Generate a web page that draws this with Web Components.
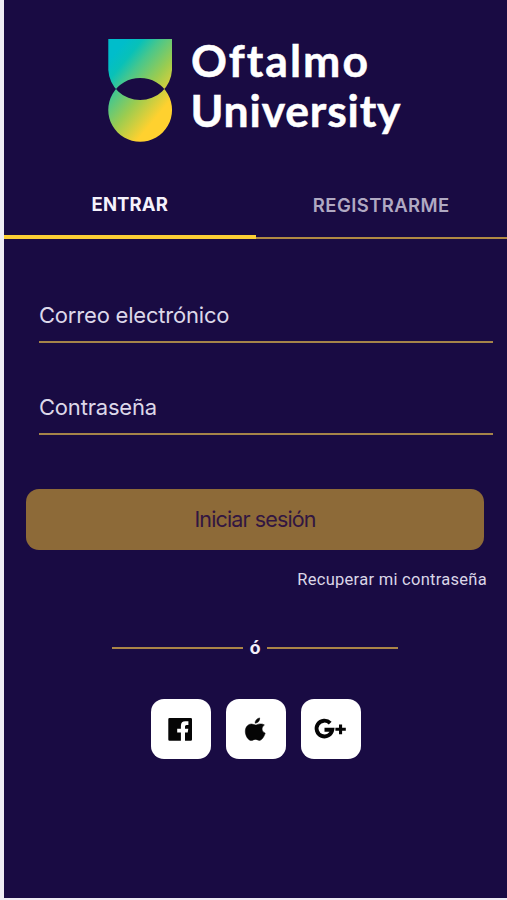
<!DOCTYPE html>
<html lang="es">
<head>
<meta charset="utf-8">
<title>Oftalmo University</title>
<style>
body {
  margin: 0;
  background: #efedf4;
}
</style>
</head>
<body>
<login-page></login-page>

<script>
function define(name, html, setup) {
  customElements.define(name, class extends HTMLElement {
    constructor() {
      super();
      this.attachShadow({ mode: 'open' });
      this.shadowRoot.innerHTML = html;
    }
    connectedCallback() {
      if (setup) setup(this, this.shadowRoot);
    }
  });
}

define('brand-logo', `
<style>
:host {
  display: flex;
  justify-content: center;
  height: 180px;
}
svg { display: block; width: 503px; height: 180px; }
text {
  font: 700 44.500px Lato, sans-serif;
  font-variant-ligatures: none;
  fill: #fff;
  stroke: #fff;
  stroke-width: .5px;
}
</style>
<svg viewBox="4 0 503 180">
  <defs>
    <linearGradient id="g" gradientUnits="userSpaceOnUse" x1="108" y1="61" x2="169" y2="112">
      <stop offset="0" stop-color="#00bdcb"/>
      <stop offset=".16" stop-color="#08c1b8"/>
      <stop offset=".33" stop-color="#48c78c"/>
      <stop offset=".6" stop-color="#9bcc50"/>
      <stop offset=".92" stop-color="#ffd12f"/>
    </linearGradient>
  </defs>
  <path fill="url(#g)" fill-rule="evenodd" d="M108.3 39H172V70A31.9 31.9 0 0 1 108.3 70ZM140.2 78A31.9 31.9 0 1 1 140.1 78Z"/>
  <text x="191" y="76.500" textLength="177">Oftalmo</text>
  <text x="190.500" y="127" textLength="210">University</text>
</svg>`);

define('tab-item', `
<style>
:host {
  display: flex;
  justify-content: center;
  flex: 1;
  box-sizing: border-box;
  height: 59px;
  padding-top: 15px;
  font: 600 18.500px/20px Inter, sans-serif;
  letter-spacing: .4px;
  color: #b0a9c2;
  border-bottom: 0 solid #fccf35;
}
:host([active]) {
  color: #f5f2fc;
  padding-top: 14px;
  font-weight: 700;
  letter-spacing: .1px;
  border-bottom-width: 4px;
}
</style>
<slot></slot>`);

define('tab-bar', `
<style>
:host {
  display: flex;
  height: 59px;
  background: linear-gradient(#b18a43, #b18a43) 0 100% / 100% 2px no-repeat;
}
</style>
<slot></slot>`);

define('text-field', `
<style>
:host {
  display: block;
  box-sizing: border-box;
  height: 43px;
  border-bottom: 2px solid #a58449;
  font: 400 22px/30px Inter, sans-serif;
  letter-spacing: -.2px;
  color: #ddd8e9;
}
span { display: inline-block; white-space: nowrap; }
</style>
<span><slot></slot></span>`);

define('submit-button', `
<style>
:host { display: block; }
button {
  display: block;
  width: 100%;
  height: 61px;
  padding: 0;
  border: 0;
  border-radius: 13px;
  background: #8d6a38;
  color: #321641;
  font: 400 21.500px/61px Inter, sans-serif;
  letter-spacing: -.88px;
}
</style>
<button><slot></slot></button>`);

define('line-divider', `
<style>
:host {
  display: flex;
  align-items: center;
  gap: 7px;
  font: 700 19px/24px Roboto, sans-serif;
  color: #f4f0fb;
}
:host::before, :host::after {
  content: "";
  flex: 1;
  height: 2px;
  background: #ab8547;
}
</style>
<slot></slot>`);

const icons = {
  facebook: '<path fill-rule="evenodd" d="M18.500 18H39.800Q41 18 41 19.200V39.600Q41 40.800 39.800 40.800H34V32.400H36.700L37.300 28.700H34V26.600Q34 25.100 35.500 25.100H37.400V21.300H34.400Q29.900 21.300 29.900 25.700V28.700H26.200V32.400H29.900V40.800H18.500Q17.300 40.800 17.300 39.600V19.200Q17.300 18 18.500 18Z"/>',
  apple: '<path stroke="#050505" stroke-width=".5" d="M33.700 17.900C33.900 20.800 31.900 23.200 29.100 23.200C28.900 20.600 31.100 18.300 33.700 17.900ZM38.400 25C35 27.200 35.400 31.600 39.200 33.100C38.300 36.300 36 40.200 33.700 40.400C32 40.500 31.500 39.400 29.500 39.400C27.500 39.400 26.900 40.400 25.400 40.500C22.300 40.600 19.300 35.700 19.300 31.400C19.300 26.900 22.200 24 25.500 24C27.300 24 28.600 25 29.600 25C30.600 25 32.300 23.800 34.500 23.900C36 23.900 37.400 24.200 38.400 25Z"/>',
  google: '<path fill="none" stroke="#050505" stroke-width="3.900" d="M29.200 23.100A7.900 7.900 0 1 0 31.300 29.800H23.500"/><path d="M38 24.400h3.100v3.400h3.700v3h-3.700v3.500H38v-3.500h-3.600v-3H38Z"/>'
};

define('social-button', `
<style>
:host { display: block; }
button {
  display: block;
  width: 60px;
  height: 60px;
  padding: 0;
  border: 0;
  border-radius: 13px;
  background: #fff;
}
svg { display: block; width: 60px; height: 60px; padding-top: 1px; box-sizing: border-box; fill: #050505; }
</style>
<button><svg viewBox="0 0 60 59"></svg></button>`, (host, root) => {
  const icon = host.getAttribute('icon');
  root.querySelector('svg').innerHTML = icons[icon];
  root.querySelector('button').setAttribute('aria-label', icon);
});

define('login-page', `
<style>
:host {
  display: flex;
  flex-direction: column;
  box-sizing: border-box;
  height: 898px;
  margin-left: 4px;
  background: #190b43;
}
.form {
  display: flex;
  flex-direction: column;
  gap: 48.500px;
  padding: 61px 14px 0 35px;
}
submit-button { margin: 54px 23px 0 22px; }
.recover {
  align-self: flex-end;
  margin: 20px 20px 0 0;
  font: 400 16.500px/20px Roboto, sans-serif;
  letter-spacing: .28px;
  color: #dbd6e8;
}
line-divider { margin: 46px 109px 0 108px; }
.social {
  display: flex;
  gap: 15px;
  margin: 39px 0 0 147px;
}
</style>
<brand-logo></brand-logo>
<tab-bar>
  <tab-item active>ENTRAR</tab-item>
  <tab-item>REGISTRARME</tab-item>
</tab-bar>
<div class="form">
  <text-field>Correo electrónico</text-field>
  <text-field>Contraseña</text-field>
</div>
<submit-button>Iniciar sesión</submit-button>
<div class="recover">Recuperar mi contraseña</div>
<line-divider>ó</line-divider>
<div class="social">
  <social-button icon="facebook"></social-button>
  <social-button icon="apple"></social-button>
  <social-button icon="google"></social-button>
</div>`);
</script>
</body>
</html>
